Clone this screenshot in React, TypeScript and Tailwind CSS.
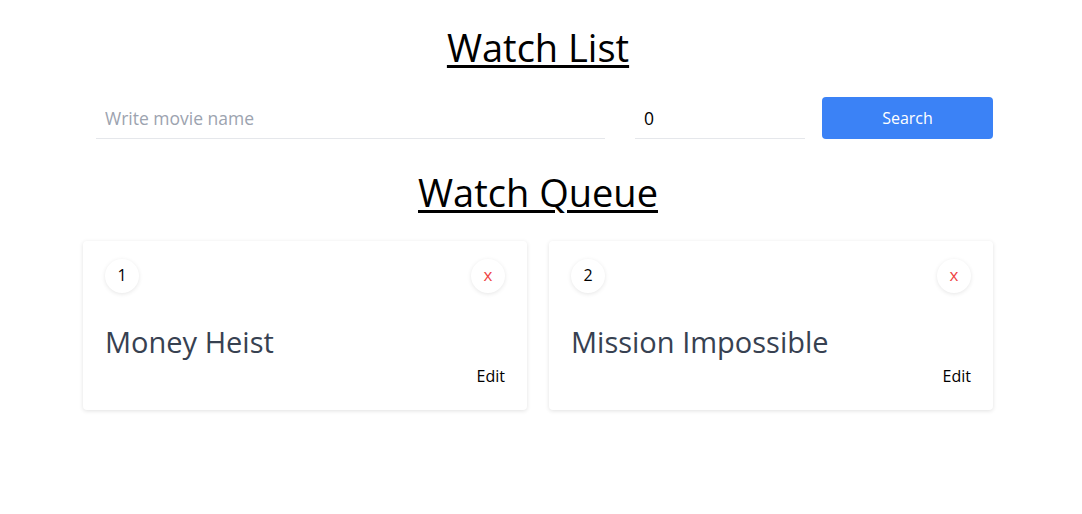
import React from "react";

const items = [
  { id: 1, name: "Money Heist" },
  { id: 2, name: "Mission Impossible" },
];

export default function App() {
  return (
    <div
      className="min-h-screen bg-white pr-[6px] text-black"
      style={{ fontFamily: '"Open Sans", "Noto Sans", sans-serif' }}
    >
      <div className="mx-auto w-[910px]">
        <h1 className="pt-[25px] text-center text-[38px] leading-[44px] underline decoration-[3px] underline-offset-[3px]">
          Watch List
        </h1>
        <div className="mt-[28px] flex items-center pl-[13px]">
          <input
            className="h-[42px] flex-1 border-b border-gray-200 px-[9px] text-[17.5px] text-black outline-none placeholder:text-[#9ca3af]"
            placeholder="Write movie name"
          />
          <input
            className="ml-[30px] h-[42px] w-[170px] border-b border-gray-200 px-[9px] text-[17.5px] text-black outline-none"
            defaultValue="0"
          />
          <button className="ml-[17px] h-[42px] w-[171px] rounded bg-[#3b82f6] text-[16px] text-white">
            Search
          </button>
        </div>
        <h2 className="mt-[31px] text-center text-[38px] leading-[44px] underline decoration-[3px] underline-offset-[3px]">
          Watch Queue
        </h2>
        <div className="mt-[27px] grid grid-cols-2 gap-[22px]">
          {items.map((it) => (
            <div
              key={it.id}
              className="flex h-[169px] flex-col rounded-sm bg-white px-[22px] pt-[18px] shadow-[0_1px_4px_rgba(0,0,0,0.12)]"
            >
              <div className="flex items-center justify-between">
                <div className="flex h-[34px] w-[34px] items-center justify-center rounded-full text-[16px] shadow-[0_1px_4px_rgba(0,0,0,0.1)]">
                  <span className="-mt-[3px]">{it.id}</span>
                </div>
                <div className="flex h-[34px] w-[34px] items-center justify-center rounded-full text-[17px] text-[#ef4444] shadow-[0_1px_4px_rgba(0,0,0,0.1)]">
                  <span className="-mt-[2px]">x</span>
                </div>
              </div>
              <div className="mt-[31px] text-[29px] leading-[36px] text-[#374151]">
                {it.name}
              </div>
              <div className="mt-[4px] text-right text-[16px] leading-[24px]">
                Edit
              </div>
            </div>
          ))}
        </div>
      </div>
    </div>
  );
}
